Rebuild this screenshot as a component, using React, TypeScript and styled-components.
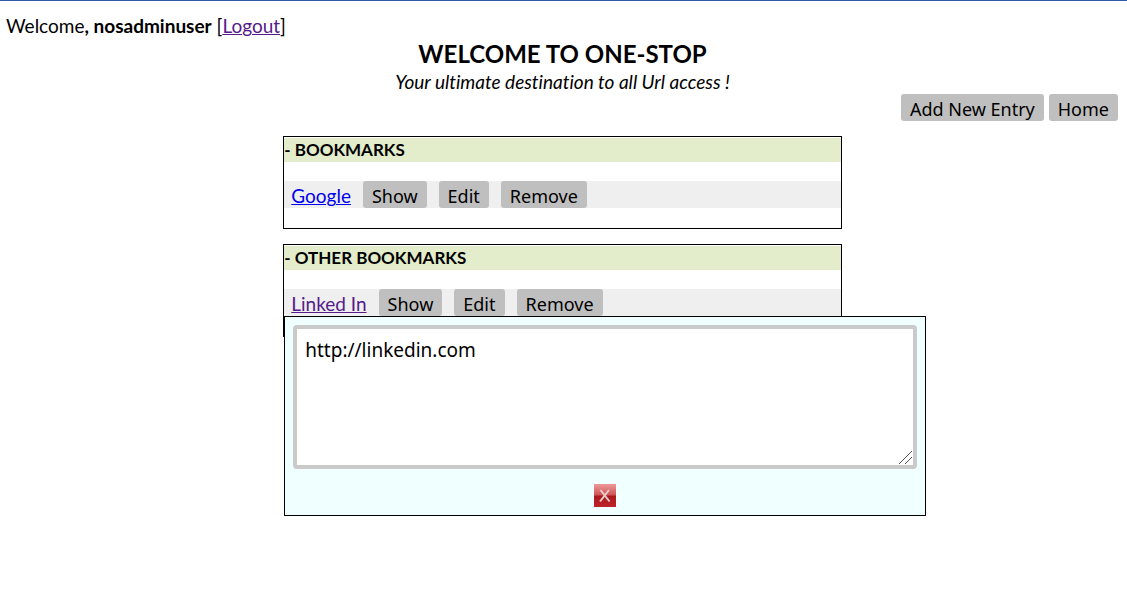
import React, { useState } from "react";
import styled, { createGlobalStyle } from "styled-components";

const GlobalStyle = createGlobalStyle`
  * { box-sizing: border-box; }
  body {
    margin: 0;
    background: #fff;
    color: #000;
    font: 19px/24px Candara, Lato, sans-serif;
    font-variant-ligatures: none;
  }
`;

const Page = styled.div`
  min-height: 100vh;
  border-top: 1px solid #2f5aa8;
  padding: 13px 8px 16px 6px;
`;

const Greeting = styled.div`
  line-height: 24px;
`;

const TextLink = styled.a<{ $visited?: boolean }>`
  color: ${(p) => (p.$visited ? "#551a8b" : "#0000ee")};
  text-decoration: underline;
  text-decoration-thickness: 1px;
`;

const Header = styled.header`
  text-align: center;
`;

const Title = styled.h1`
  margin: 0;
  font-size: 24px;
  line-height: 32px;
  font-weight: 700;
`;

const Tagline = styled.p`
  margin: 0;
  font-style: italic;
  line-height: 24px;
`;

const Toolbar = styled.nav`
  display: flex;
  justify-content: flex-end;
  gap: 5px;
  padding-right: 1px;
`;

const Button = styled.button`
  height: 27px;
  padding: 4px 9px 0;
  border: 0;
  border-radius: 3px;
  background: #bfbfbf;
  color: #000;
  font: 18px/23px Tahoma, "Noto Sans", sans-serif;
  white-space: nowrap;
`;

const Panels = styled.main`
  display: flex;
  flex-direction: column;
  align-items: center;
  gap: 15px;
  margin-top: 15px;
`;

const Panel = styled.section`
  box-sizing: content-box;
  width: 50%;
  border: 1px solid #000;
  padding: 1px 0 20px;
`;

const PanelTitle = styled.h2`
  margin: 0 0 19px;
  background: #e3edcb;
  font-size: 17px;
  line-height: 24px;
  font-weight: 700;
`;

const Row = styled.div`
  position: relative;
  display: flex;
  align-items: baseline;
  gap: 12px;
  padding-left: 7px;
  background: #efefef;
`;

const Popup = styled.div`
  position: absolute;
  top: 100%;
  left: 0;
  display: flex;
  flex-direction: column;
  align-items: center;
  gap: 15px;
  padding: 8px;
  border: 1px solid #000;
  background: #f0ffff;
`;

const UrlBox = styled.textarea`
  display: block;
  width: 624px;
  height: 144px;
  padding: 8px;
  border: 4px solid #cacaca;
  border-radius: 4px;
  background: #fff;
  color: #000;
  font: 19px/26px Tahoma, "Noto Sans", sans-serif;
  outline: 0;

  &::-webkit-resizer {
    background: linear-gradient(
        135deg,
        transparent 48%,
        #555 48%,
        #555 52%,
        transparent 52%,
        transparent 71%,
        #555 71%,
        #555 75%,
        transparent 75%
      )
      1px 1px / 13px 13px no-repeat;
  }
`;

const CloseButton = styled.button`
  width: 22px;
  height: 23px;
  padding: 0;
  border: 0;
  background: none;

  svg { display: block; }
`;

const CloseIcon = () => (
  <svg width="22" height="23" viewBox="0 0 22 23" aria-hidden="true">
    <defs>
      <linearGradient id="gloss" x1="0" y1="0" x2="0" y2="1">
        <stop offset="0" stopColor="#ee9a9a" />
        <stop offset="0.47" stopColor="#cf5557" />
        <stop offset="0.53" stopColor="#a8191d" />
        <stop offset="1" stopColor="#bf2429" />
      </linearGradient>
    </defs>
    <rect width="22" height="23" fill="url(#gloss)" />
    <path d="M6.5 6L15.5 17.5M15 6L6 17.5" stroke="#e6cccc" strokeWidth="2" fill="none" />
  </svg>
);

interface Bookmark {
  name: string;
  url: string;
  visited?: boolean;
}

const groups: { title: string; items: Bookmark[] }[] = [
  { title: "BOOKMARKS", items: [{ name: "Google", url: "http://google.com" }] },
  {
    title: "OTHER BOOKMARKS",
    items: [{ name: "Linked In", url: "http://linkedin.com", visited: true }],
  },
];

export default function App() {
  const [shown, setShown] = useState<string | null>("Linked In");

  return (
    <>
      <GlobalStyle />
      <Page>
        <Greeting>
          Welcome<b>, nosadminuser</b> [<TextLink href="#logout" $visited>Logout</TextLink>]
        </Greeting>
        <Header>
          <Title>WELCOME TO ONE-STOP</Title>
          <Tagline>Your ultimate destination to all Url access !</Tagline>
        </Header>
        <Toolbar>
          <Button type="button">Add New Entry</Button>
          <Button type="button">Home</Button>
        </Toolbar>
        <Panels>
          {groups.map((group) => (
            <Panel key={group.title}>
              <PanelTitle>- {group.title}</PanelTitle>
              {group.items.map((item) => (
                <Row key={item.name}>
                  <TextLink href={item.url} $visited={item.visited}>{item.name}</TextLink>
                  <Button type="button" onClick={() => setShown(item.name)}>Show</Button>
                  <Button type="button">Edit</Button>
                  <Button type="button">Remove</Button>
                  {shown === item.name && (
                    <Popup>
                      <UrlBox aria-label={`${item.name} address`} defaultValue={item.url} spellCheck={false} />
                      <CloseButton type="button" aria-label="Close" onClick={() => setShown(null)}>
                        <CloseIcon />
                      </CloseButton>
                    </Popup>
                  )}
                </Row>
              ))}
            </Panel>
          ))}
        </Panels>
      </Page>
    </>
  );
}
